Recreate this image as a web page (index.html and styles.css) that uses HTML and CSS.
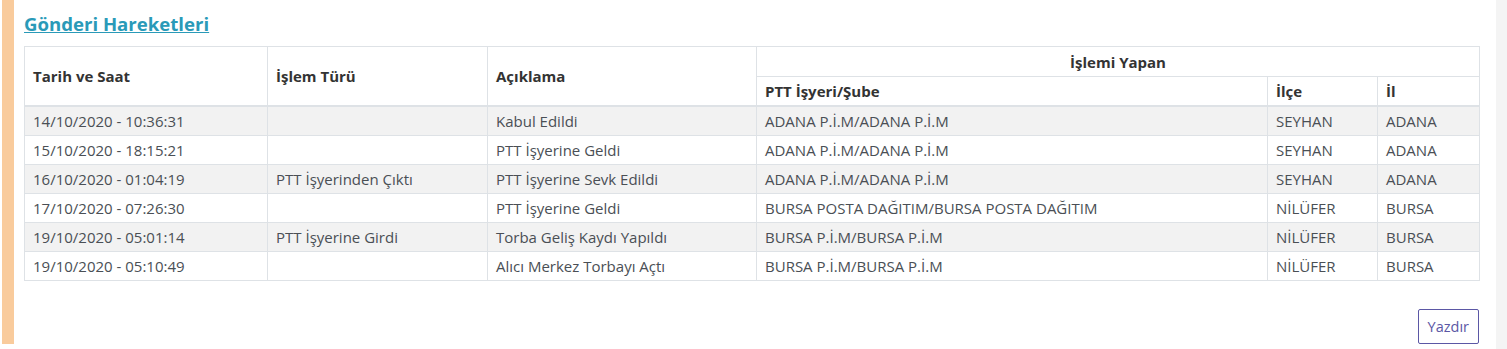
FILE: index.html
```html
<!DOCTYPE html>
<html lang="tr">
<head>
<meta charset="utf-8">
<link rel="stylesheet" href="styles.css">
</head>
<body>
<div class="page">
  <div class="stripe"></div>
  <main class="content">
    <h2 class="title"><a href="#">Gönderi Hareketleri</a></h2>
    <table class="moves">
      <colgroup>
        <col style="width:243px">
        <col style="width:220px">
        <col style="width:269px">
        <col style="width:511px">
        <col style="width:110px">
        <col style="width:102px">
      </colgroup>
      <thead>
        <tr class="top">
          <th rowspan="2" class="mid">Tarih ve Saat</th>
          <th rowspan="2" class="mid">İşlem Türü</th>
          <th rowspan="2" class="mid">Açıklama</th>
          <th colspan="3" class="center">İşlemi Yapan</th>
        </tr>
        <tr>
          <th>PTT İşyeri/Şube</th>
          <th>İlçe</th>
          <th>İl</th>
        </tr>
      </thead>
      <tbody>
        <tr><td>14/10/2020 - 10:36:31</td><td></td><td>Kabul Edildi</td><td>ADANA P.İ.M/ADANA P.İ.M</td><td>SEYHAN</td><td>ADANA</td></tr>
        <tr><td>15/10/2020 - 18:15:21</td><td></td><td>PTT İşyerine Geldi</td><td>ADANA P.İ.M/ADANA P.İ.M</td><td>SEYHAN</td><td>ADANA</td></tr>
        <tr><td>16/10/2020 - 01:04:19</td><td>PTT İşyerinden Çıktı</td><td>PTT İşyerine Sevk Edildi</td><td>ADANA P.İ.M/ADANA P.İ.M</td><td>SEYHAN</td><td>ADANA</td></tr>
        <tr><td>17/10/2020 - 07:26:30</td><td></td><td>PTT İşyerine Geldi</td><td>BURSA POSTA DAĞITIM/BURSA POSTA DAĞITIM</td><td>NİLÜFER</td><td>BURSA</td></tr>
        <tr><td>19/10/2020 - 05:01:14</td><td>PTT İşyerine Girdi</td><td>Torba Geliş Kaydı Yapıldı</td><td>BURSA P.İ.M/BURSA P.İ.M</td><td>NİLÜFER</td><td>BURSA</td></tr>
        <tr><td>19/10/2020 - 05:10:49</td><td></td><td>Alıcı Merkez Torbayı Açtı</td><td>BURSA P.İ.M/BURSA P.İ.M</td><td>NİLÜFER</td><td>BURSA</td></tr>
      </tbody>
    </table>
    <div class="actions">
      <button class="print" type="button">Yazdır</button>
    </div>
  </main>
  <div class="side"></div>
</div>
</body>
</html>
```

FILE: styles.css
```css
html, body {
  margin: 0;
  padding: 0;
  background: #ffffff;
}
body {
  font-family: "Open Sans", "Noto Sans", sans-serif;
  font-size: 15px;
  color: #4a4f55;
}
.page {
  display: flex;
  height: 349px;
}
.stripe {
  width: 12px;
  margin-left: 2px;
  height: 344px;
  background: #f9cb9c;
  flex: none;
}
.content {
  flex: 1;
  padding: 12px 17px 0 10px;
  min-width: 0;
}
.side {
  width: 11px;
  flex: none;
  background: #f4f4f4;
}
.title {
  margin: 0 0 10px 0;
  font-size: 18.6px;
  font-weight: 700;
  line-height: 24px;
}
.title a {
  color: #2a9ab8;
  text-decoration: underline;
}
.moves {
  width: 100%;
  border-collapse: collapse;
  table-layout: fixed;
  border: 1px solid #dee2e6;
}
.moves th, .moves td {
  border: 1px solid #dee2e6;
  padding: 4px 8px;
  line-height: 20px;
  text-align: left;
  white-space: nowrap;
}
.moves tr.top th.center {
  padding-top: 5px;
}
.moves th {
  font-weight: 700;
  color: #333;
  vertical-align: bottom;
}
.moves th.mid {
  vertical-align: middle;
}
.moves th.center {
  text-align: center;
}
.moves thead tr:last-child th,
.moves th.mid {
  border-bottom: 2px solid #dee2e6;
}
.moves tbody tr:nth-child(odd) {
  background: #f2f2f2;
}
.actions {
  display: flex;
  justify-content: flex-end;
  margin-top: 28px;
}
.print {
  font-family: inherit;
  font-size: 14.5px;
  color: #5b57a5;
  background: #fff;
  border: 1px solid #5b57a5;
  border-radius: 2px;
  padding: 6px 9px;
  line-height: 21px;
}
```
